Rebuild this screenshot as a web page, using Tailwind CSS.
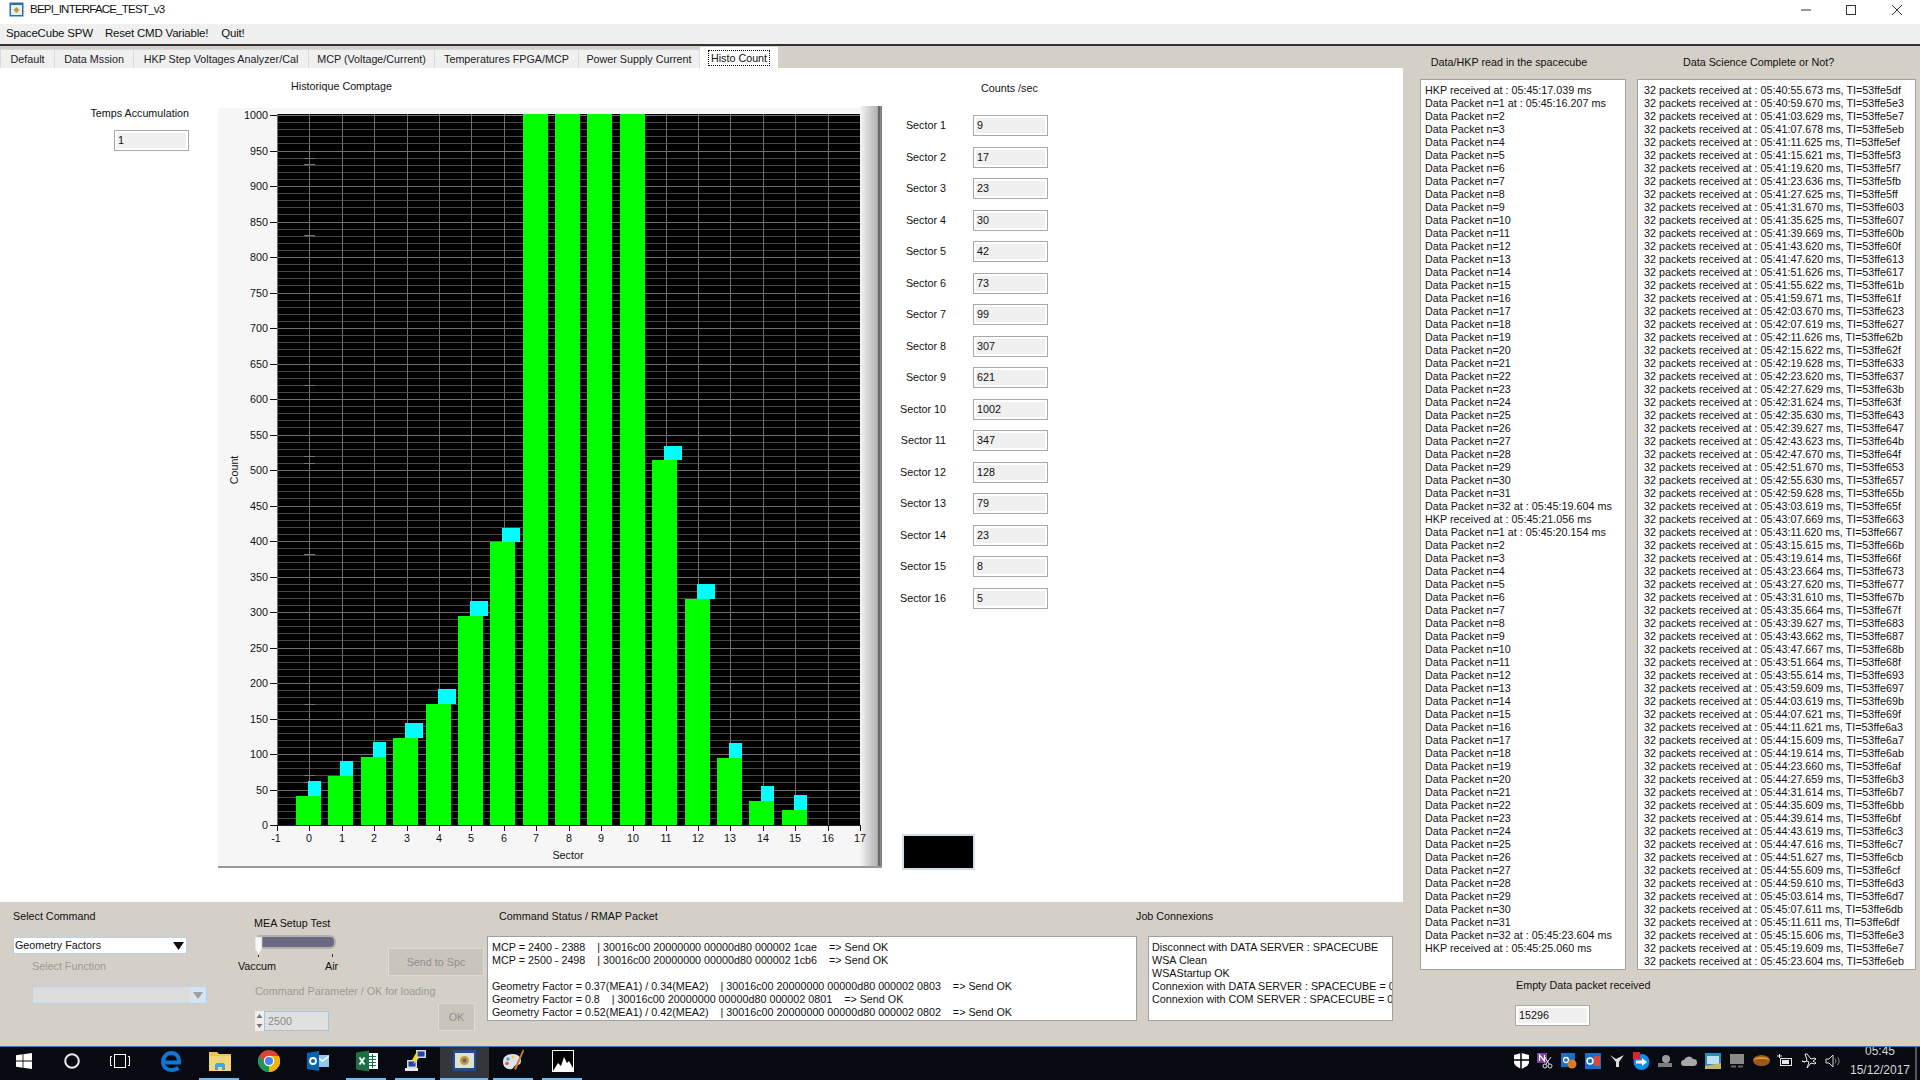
<!DOCTYPE html>
<html lang="en">
<head>
<meta charset="utf-8">
<title>BEPI_INTERFACE_TEST_v3</title>
<script src="https://cdn.jsdelivr.net/npm/@tailwindcss/browser@4"></script>
</head>
<body class="m-0">
<div class="w-[1920px] h-[1080px] overflow-hidden flex flex-col bg-[#d4d0c8] text-[#111] text-[10.75px] leading-[13px] font-['Liberation_Sans',sans-serif]">

  <!-- title bar -->
  <div class="h-[24px] pb-[5px] bg-white flex items-center shrink-0">
    <svg class="ml-[9px] w-[15px] h-[15px]" viewBox="0 0 15 15"><rect x="0.5" y="0.5" width="14" height="14" fill="#2f6fa8"/><rect x="2" y="3" width="11" height="10" fill="#e8eef5"/><path d="M7.5 5l3 3-3 3-3-3z" fill="#c79a2c"/></svg>
    <span class="ml-[6px] text-[11.5px] tracking-[-0.78px]">BEPI_INTERFACE_TEST_v3</span>
    <div class="ml-auto flex items-center">
      <svg class="w-[12px] h-[12px]" viewBox="0 0 12 12"><path d="M1 6h10" stroke="#333" stroke-width="1"/></svg>
      <svg class="ml-[33px] w-[12px] h-[12px]" viewBox="0 0 12 12"><rect x="1.5" y="1.5" width="9" height="9" fill="none" stroke="#333"/></svg>
      <svg class="ml-[34px] mr-[17px] w-[12px] h-[12px]" viewBox="0 0 12 12"><path d="M1 1l10 10M11 1L1 11" stroke="#333"/></svg>
    </div>
  </div>

  <!-- menu -->
  <div class="h-[22px] pb-[1px] bg-[#f0f0f0] border-b-2 border-[#333] flex items-center text-[11.5px] tracking-[-0.2px] shrink-0">
    <span class="ml-[6px]">SpaceCube SPW</span>
    <span class="ml-[12px]">Reset CMD Variable!</span>
    <span class="ml-[13px]">Quit!</span>
  </div>

  <div class="flex flex-1 min-h-0">
    <!-- left part -->
    <div class="w-[1403px] flex flex-col shrink-0">
      <!-- tabs -->
      <div class="h-[22px] flex items-end text-[#222]">
        <div class="w-[55px] h-[19px] bg-[#f0f0f0] border border-b-0 border-[#d9d9d9] flex items-center justify-center">Default</div>
        <div class="w-[79px] h-[19px] bg-[#f0f0f0] border border-b-0 border-l-0 border-[#d9d9d9] flex items-center justify-center">Data Mssion</div>
        <div class="w-[175px] h-[19px] bg-[#f0f0f0] border border-b-0 border-l-0 border-[#d9d9d9] flex items-center justify-center">HKP Step Voltages Analyzer/Cal</div>
        <div class="w-[126px] h-[19px] bg-[#f0f0f0] border border-b-0 border-l-0 border-[#d9d9d9] flex items-center justify-center">MCP (Voltage/Current)</div>
        <div class="w-[144px] h-[19px] bg-[#f0f0f0] border border-b-0 border-l-0 border-[#d9d9d9] flex items-center justify-center">Temperatures FPGA/MCP</div>
        <div class="w-[121px] h-[19px] bg-[#f0f0f0] border border-b-0 border-l-0 border-[#d9d9d9] flex items-center justify-center">Power Supply Current</div>
        <div class="w-[78px] h-[21px] bg-white flex items-start justify-center pt-[3px]"><span class="border border-dotted border-black px-[2px] h-[16px] leading-[14px] text-[#111]">Histo Count</span></div>
      </div>

      <!-- white page -->
      <div class="h-[834px] bg-white flex shrink-0">
        <div class="w-[218px] pr-[29px] pt-[39px] flex flex-col items-end shrink-0">
          <div class="whitespace-nowrap">Temps Accumulation</div>
          <div class="mt-[10px] w-[75px] h-[21px] border border-[#a8a8a8] bg-[#f0f0f0] shadow-[inset_0_0_0_2px_#fff] px-[3px] leading-[19px]">1</div>
        </div>

        <div class="w-[664px] shrink-0 pt-[12px]">
          <div class="pl-[73px] h-[13px] mb-[13px]">Historique Comptage</div>
          <svg class="block w-[664px] h-[762px] text-[10.75px]" viewBox="0 0 664 762" fill="#111">
            <defs><linearGradient id="edge" x1="0" x2="1" y1="0" y2="0"><stop offset="0" stop-color="#f5f5f5"/><stop offset="0.75" stop-color="#b5b5b5"/><stop offset="1" stop-color="#777"/></linearGradient></defs>
            <rect x="0" y="2" width="664" height="760" fill="#f6f6f6"/>
            <rect x="642" y="0" width="22" height="762" fill="url(#edge)"/>
            <rect x="660" y="0" width="2" height="762" fill="#666"/>
            <rect x="0" y="760" width="664" height="2" fill="#9a9a9a"/>
            <g transform="translate(59 8)">
              <rect x="0" y="0" width="583" height="711" fill="#000"/>
              <path shape-rendering="crispEdges" stroke="#484848" d="M0 8H583M0 15H583M0 22H583M0 29H583M0 44H583M0 51H583M0 58H583M0 65H583M0 79H583M0 86H583M0 93H583M0 100H583M0 115H583M0 122H583M0 129H583M0 136H583M0 150H583M0 157H583M0 164H583M0 171H583M0 186H583M0 193H583M0 200H583M0 207H583M0 221H583M0 228H583M0 235H583M0 242H583M0 257H583M0 264H583M0 271H583M0 278H583M0 292H583M0 299H583M0 306H583M0 313H583M0 328H583M0 335H583M0 342H583M0 349H583M0 363H583M0 370H583M0 377H583M0 384H583M0 399H583M0 406H583M0 413H583M0 420H583M0 434H583M0 441H583M0 448H583M0 455H583M0 470H583M0 477H583M0 484H583M0 491H583M0 505H583M0 512H583M0 519H583M0 526H583M0 541H583M0 548H583M0 555H583M0 562H583M0 576H583M0 583H583M0 590H583M0 597H583M0 612H583M0 619H583M0 626H583M0 633H583M0 647H583M0 654H583M0 661H583M0 668H583M0 683H583M0 690H583M0 697H583M0 704H583"/>
              <path shape-rendering="crispEdges" stroke="#6e6e6e" d="M0 1H583M0 37H583M0 72H583M0 108H583M0 143H583M0 179H583M0 214H583M0 250H583M0 285H583M0 321H583M0 356H583M0 392H583M0 427H583M0 463H583M0 498H583M0 534H583M0 569H583M0 605H583M0 640H583M0 676H583M32 0V711M65 0V711M97 0V711M130 0V711M162 0V711M194 0V711M227 0V711M259 0V711M292 0V711M324 0V711M356 0V711M389 0V711M421 0V711M453 0V711M486 0V711M518 0V711M551 0V711M0 0V711"/>
              <path shape-rendering="crispEdges" stroke="#777" d="M27 44H38M27 50H38M27 121H38M27 271H38M27 342H38M27 349H38M27 440H38M27 590H38M27 661H38M27 668H38"/>
              <g fill="#00ffff" shape-rendering="crispEdges">
                <rect x="31" y="667" width="13" height="15"/><rect x="63" y="647" width="13" height="15"/><rect x="96" y="628" width="13" height="15"/><rect x="128" y="609" width="18" height="15"/><rect x="161" y="575" width="18" height="15"/><rect x="193" y="487" width="18" height="15"/><rect x="225" y="414" width="18" height="14"/><rect x="387" y="332" width="18" height="14"/><rect x="420" y="470" width="18" height="15"/><rect x="452" y="629" width="13" height="15"/><rect x="484" y="672" width="13" height="15"/><rect x="517" y="681" width="13" height="15"/>
              </g>
              <g fill="#00ff00" shape-rendering="crispEdges">
                <rect x="19" y="682" width="25" height="29"/><rect x="51" y="662" width="25" height="49"/><rect x="84" y="643" width="25" height="68"/><rect x="116" y="624" width="25" height="87"/><rect x="149" y="590" width="25" height="121"/><rect x="181" y="502" width="25" height="209"/><rect x="213" y="428" width="25" height="283"/><rect x="246" y="0" width="25" height="711"/><rect x="278" y="0" width="25" height="711"/><rect x="310" y="0" width="25" height="711"/><rect x="343" y="0" width="25" height="711"/><rect x="375" y="346" width="25" height="365"/><rect x="408" y="485" width="25" height="226"/><rect x="440" y="644" width="25" height="67"/><rect x="472" y="687" width="25" height="24"/><rect x="505" y="696" width="25" height="15"/>
              </g>
              <rect x="0" y="711" width="584" height="1" fill="#222"/>
              <path shape-rendering="crispEdges" stroke="#111" d="M-7 1H0M-7 37H0M-7 72H0M-7 108H0M-7 143H0M-7 179H0M-7 214H0M-7 250H0M-7 285H0M-7 321H0M-7 356H0M-7 392H0M-7 427H0M-7 463H0M-7 498H0M-7 534H0M-7 569H0M-7 605H0M-7 640H0M-7 676H0M-7 711H0M0 711V717M32 711V717M65 711V717M97 711V717M130 711V717M162 711V717M194 711V717M227 711V717M259 711V717M292 711V717M324 711V717M356 711V717M389 711V717M421 711V717M453 711V717M486 711V717M518 711V717M551 711V717M583 711V717"/>
              <g text-anchor="end">
                <text x="-9" y="5">1000</text><text x="-9" y="41">950</text><text x="-9" y="76">900</text><text x="-9" y="112">850</text><text x="-9" y="147">800</text><text x="-9" y="183">750</text><text x="-9" y="218">700</text><text x="-9" y="254">650</text><text x="-9" y="289">600</text><text x="-9" y="325">550</text><text x="-9" y="360">500</text><text x="-9" y="396">450</text><text x="-9" y="431">400</text><text x="-9" y="467">350</text><text x="-9" y="502">300</text><text x="-9" y="538">250</text><text x="-9" y="573">200</text><text x="-9" y="609">150</text><text x="-9" y="644">100</text><text x="-9" y="680">50</text><text x="-9" y="715">0</text>
              </g>
              <g text-anchor="middle">
                <text x="-1" y="728">-1</text><text x="32" y="728">0</text><text x="65" y="728">1</text><text x="97" y="728">2</text><text x="130" y="728">3</text><text x="162" y="728">4</text><text x="194" y="728">5</text><text x="227" y="728">6</text><text x="259" y="728">7</text><text x="292" y="728">8</text><text x="324" y="728">9</text><text x="356" y="728">10</text><text x="389" y="728">11</text><text x="421" y="728">12</text><text x="453" y="728">13</text><text x="486" y="728">14</text><text x="518" y="728">15</text><text x="551" y="728">16</text><text x="583" y="728">17</text>
                <text x="291" y="745">Sector</text>
              </g>
              <text text-anchor="middle" transform="translate(-39 356) rotate(-90)">Count</text>
            </g>
          </svg>
        </div>

        <div class="flex-1 flex flex-col">
          <div class="mt-[14px] ml-[99px] h-[13px] whitespace-nowrap">Counts /sec</div>
          <div class="mt-[20px] grid grid-cols-[64px_75px] gap-x-[27px] auto-rows-[31.5px] items-start">
            <div class="text-right leading-[20px]">Sector 1</div><div class="h-[21px] border border-[#a8a8a8] bg-[#f0f0f0] shadow-[inset_0_0_0_2px_#fff] px-[3px] leading-[19px]">9</div>
            <div class="text-right leading-[20px]">Sector 2</div><div class="h-[21px] border border-[#a8a8a8] bg-[#f0f0f0] shadow-[inset_0_0_0_2px_#fff] px-[3px] leading-[19px]">17</div>
            <div class="text-right leading-[20px]">Sector 3</div><div class="h-[21px] border border-[#a8a8a8] bg-[#f0f0f0] shadow-[inset_0_0_0_2px_#fff] px-[3px] leading-[19px]">23</div>
            <div class="text-right leading-[20px]">Sector 4</div><div class="h-[21px] border border-[#a8a8a8] bg-[#f0f0f0] shadow-[inset_0_0_0_2px_#fff] px-[3px] leading-[19px]">30</div>
            <div class="text-right leading-[20px]">Sector 5</div><div class="h-[21px] border border-[#a8a8a8] bg-[#f0f0f0] shadow-[inset_0_0_0_2px_#fff] px-[3px] leading-[19px]">42</div>
            <div class="text-right leading-[20px]">Sector 6</div><div class="h-[21px] border border-[#a8a8a8] bg-[#f0f0f0] shadow-[inset_0_0_0_2px_#fff] px-[3px] leading-[19px]">73</div>
            <div class="text-right leading-[20px]">Sector 7</div><div class="h-[21px] border border-[#a8a8a8] bg-[#f0f0f0] shadow-[inset_0_0_0_2px_#fff] px-[3px] leading-[19px]">99</div>
            <div class="text-right leading-[20px]">Sector 8</div><div class="h-[21px] border border-[#a8a8a8] bg-[#f0f0f0] shadow-[inset_0_0_0_2px_#fff] px-[3px] leading-[19px]">307</div>
            <div class="text-right leading-[20px]">Sector 9</div><div class="h-[21px] border border-[#a8a8a8] bg-[#f0f0f0] shadow-[inset_0_0_0_2px_#fff] px-[3px] leading-[19px]">621</div>
            <div class="text-right leading-[20px]">Sector 10</div><div class="h-[21px] border border-[#a8a8a8] bg-[#f0f0f0] shadow-[inset_0_0_0_2px_#fff] px-[3px] leading-[19px]">1002</div>
            <div class="text-right leading-[20px]">Sector 11</div><div class="h-[21px] border border-[#a8a8a8] bg-[#f0f0f0] shadow-[inset_0_0_0_2px_#fff] px-[3px] leading-[19px]">347</div>
            <div class="text-right leading-[20px]">Sector 12</div><div class="h-[21px] border border-[#a8a8a8] bg-[#f0f0f0] shadow-[inset_0_0_0_2px_#fff] px-[3px] leading-[19px]">128</div>
            <div class="text-right leading-[20px]">Sector 13</div><div class="h-[21px] border border-[#a8a8a8] bg-[#f0f0f0] shadow-[inset_0_0_0_2px_#fff] px-[3px] leading-[19px]">79</div>
            <div class="text-right leading-[20px]">Sector 14</div><div class="h-[21px] border border-[#a8a8a8] bg-[#f0f0f0] shadow-[inset_0_0_0_2px_#fff] px-[3px] leading-[19px]">23</div>
            <div class="text-right leading-[20px]">Sector 15</div><div class="h-[21px] border border-[#a8a8a8] bg-[#f0f0f0] shadow-[inset_0_0_0_2px_#fff] px-[3px] leading-[19px]">8</div>
            <div class="text-right leading-[20px]">Sector 16</div><div class="h-[21px] border border-[#a8a8a8] bg-[#f0f0f0] shadow-[inset_0_0_0_2px_#fff] px-[3px] leading-[19px]">5</div>
          </div>
          <div class="mt-[215px] ml-[20px] w-[73px] h-[36px] bg-black border-2 border-[#d0dce8]"></div>
        </div>
      </div>

      <!-- bottom controls -->
      <div class="flex-1 flex">
        <div class="ml-[13px] w-[194px] pt-[8px] shrink-0">
          <div class="h-[13px]">Select Command</div>
          <div class="mt-[14px] w-[174px] h-[17px] bg-white border border-[#b5d3ee] flex items-center px-[1px]">
            <span class="flex-1">Geometry Factors</span>
            <svg class="w-[11px] h-[8px] mr-[1px]" viewBox="0 0 11 8"><path d="M0 0h11L5.500 8z" fill="#111"/></svg>
          </div>
          <div class="mt-[6px] ml-[19px] h-[13px] text-[#9a9a9a]">Select Function</div>
          <div class="mt-[13px] ml-[19px] w-[175px] h-[18px] bg-[#dcdcdc] border border-[#b5d3ee] flex items-center justify-end">
            <div class="w-[16px] h-full bg-[#d4e4f2] flex items-center justify-center"><svg class="w-[10px] h-[7px]" viewBox="0 0 10 7"><path d="M0 0h10L5 7z" fill="#a0a0a0"/></svg></div>
          </div>
        </div>

        <div class="ml-[31px] w-[246px] pt-[15px] shrink-0">
          <div class="flex">
            <div class="w-[150px] shrink-0">
              <div class="ml-[16px] h-[13px] whitespace-nowrap">MEA Setup Test</div>
              <div class="relative ml-[16px] mt-[4px] w-[84px] h-[27px]">
                <div class="ml-[3px] mt-[5px] w-[79px] h-[14px] rounded-r-[6px] rounded-l-[2px] bg-[#6b6a85] border-2 border-[#b4b0a8]"></div>
                <svg class="absolute left-0 top-[1px] w-[9px] h-[19px]" viewBox="0 0 9 19"><path d="M1 1h7v12l-3.500 6L1 13z" fill="#f7f7f7" stroke="#c9c9c9" stroke-width="0.6"/></svg>
                <div class="ml-[4px] mt-[5px] w-[75px] h-[3px] border-x border-[#333]"></div>
              </div>
              <div class="mt-[-2px] flex h-[13px]">
                <span>Vaccum</span><span class="ml-[49px]">Air</span>
              </div>
            </div>
            <div class="mt-[31px] w-[96px] h-[28px] border border-[#dedbd5] bg-[#c9c5bd] text-[#8f8f8f] flex items-center justify-center">Send to Spc</div>
          </div>
          <div class="mt-[9px] ml-[17px] h-[13px] text-[#9a9a9a] whitespace-nowrap">Command Parameter / OK for loading</div>
          <div class="mt-[5px] ml-[17px] flex items-end">
            <div class="w-[9px] h-[20px] flex flex-col bg-[#eee]">
              <svg class="w-[9px] h-[10px]" viewBox="0 0 9 10"><path d="M1.500 7L4.500 3l3 4z" fill="#777"/></svg>
              <svg class="w-[9px] h-[10px]" viewBox="0 0 9 10"><path d="M1.500 3L4.500 7l3-4z" fill="#777"/></svg>
            </div>
            <div class="w-[65px] h-[20px] border border-[#a9c3dc] bg-[#e0e0e0] text-[#8a8a8a] px-[3px] leading-[18px]">2500</div>
            <div class="ml-[109px] w-[37px] h-[28px] border border-[#dedbd5] bg-[#c9c5bd] text-[#8f8f8f] flex items-center justify-center">OK</div>
          </div>
        </div>

        <div class="ml-[3px] w-[650px] pt-[8px] shrink-0">
          <div class="ml-[12px] h-[13px]">Command Status / RMAP Packet</div>
          <div class="mt-[13px] h-[85px] bg-white border border-[#a0a0a0] pl-[4px] pt-[4px] overflow-hidden whitespace-pre">MCP = 2400 - 2388    | 30016c00 20000000 00000d80 000002 1cae    =&gt; Send OK
MCP = 2500 - 2498    | 30016c00 20000000 00000d80 000002 1cb6    =&gt; Send OK

Geometry Factor = 0.37(MEA1) / 0.34(MEA2)    | 30016c00 20000000 00000d80 000002 0803    =&gt; Send OK
Geometry Factor = 0.8    | 30016c00 20000000 00000d80 000002 0801    =&gt; Send OK
Geometry Factor = 0.52(MEA1) / 0.42(MEA2)    | 30016c00 20000000 00000d80 000002 0802    =&gt; Send OK</div>
        </div>

        <div class="ml-[11px] w-[245px] pt-[8px] shrink-0">
          <div class="ml-[-12px] h-[13px]">Job Connexions</div>
          <div class="mt-[13px] h-[85px] bg-white border border-[#a0a0a0] pl-[3px] pt-[4px] overflow-hidden whitespace-pre">Disconnect with DATA SERVER : SPACECUBE
WSA Clean
WSAStartup OK
Connexion with DATA SERVER : SPACECUBE = 0
Connexion with COM SERVER : SPACECUBE = 0</div>
        </div>
      </div>
    </div>

    <!-- right part -->
    <div class="flex-1 min-w-0">
      <div class="pt-[10px] flex h-[33px] whitespace-nowrap">
        <div class="ml-[27px] w-[158px] text-center">Data/HKP read in the spacecube</div>
        <div class="ml-[95px] w-[149px] text-center">Data Science Complete or Not?</div>
      </div>
      <div class="flex">
        <div class="ml-[17px] w-[206px] h-[891px] bg-white border border-[#a0a0a0] pl-[4px] pt-[4px] overflow-hidden whitespace-pre">HKP received at : 05:45:17.039 ms
Data Packet n=1 at : 05:45:16.207 ms
Data Packet n=2
Data Packet n=3
Data Packet n=4
Data Packet n=5
Data Packet n=6
Data Packet n=7
Data Packet n=8
Data Packet n=9
Data Packet n=10
Data Packet n=11
Data Packet n=12
Data Packet n=13
Data Packet n=14
Data Packet n=15
Data Packet n=16
Data Packet n=17
Data Packet n=18
Data Packet n=19
Data Packet n=20
Data Packet n=21
Data Packet n=22
Data Packet n=23
Data Packet n=24
Data Packet n=25
Data Packet n=26
Data Packet n=27
Data Packet n=28
Data Packet n=29
Data Packet n=30
Data Packet n=31
Data Packet n=32 at : 05:45:19.604 ms
HKP received at : 05:45:21.056 ms
Data Packet n=1 at : 05:45:20.154 ms
Data Packet n=2
Data Packet n=3
Data Packet n=4
Data Packet n=5
Data Packet n=6
Data Packet n=7
Data Packet n=8
Data Packet n=9
Data Packet n=10
Data Packet n=11
Data Packet n=12
Data Packet n=13
Data Packet n=14
Data Packet n=15
Data Packet n=16
Data Packet n=17
Data Packet n=18
Data Packet n=19
Data Packet n=20
Data Packet n=21
Data Packet n=22
Data Packet n=23
Data Packet n=24
Data Packet n=25
Data Packet n=26
Data Packet n=27
Data Packet n=28
Data Packet n=29
Data Packet n=30
Data Packet n=31
Data Packet n=32 at : 05:45:23.604 ms
HKP received at : 05:45:25.060 ms</div>
        <div class="ml-[11px] w-[279px] h-[891px] bg-white border border-[#a0a0a0] pl-[6px] pt-[4px] overflow-hidden whitespace-pre">32 packets received at : 05:40:55.673 ms, TI=53ffe5df
32 packets received at : 05:40:59.670 ms, TI=53ffe5e3
32 packets received at : 05:41:03.629 ms, TI=53ffe5e7
32 packets received at : 05:41:07.678 ms, TI=53ffe5eb
32 packets received at : 05:41:11.625 ms, TI=53ffe5ef
32 packets received at : 05:41:15.621 ms, TI=53ffe5f3
32 packets received at : 05:41:19.620 ms, TI=53ffe5f7
32 packets received at : 05:41:23.636 ms, TI=53ffe5fb
32 packets received at : 05:41:27.625 ms, TI=53ffe5ff
32 packets received at : 05:41:31.670 ms, TI=53ffe603
32 packets received at : 05:41:35.625 ms, TI=53ffe607
32 packets received at : 05:41:39.669 ms, TI=53ffe60b
32 packets received at : 05:41:43.620 ms, TI=53ffe60f
32 packets received at : 05:41:47.620 ms, TI=53ffe613
32 packets received at : 05:41:51.626 ms, TI=53ffe617
32 packets received at : 05:41:55.622 ms, TI=53ffe61b
32 packets received at : 05:41:59.671 ms, TI=53ffe61f
32 packets received at : 05:42:03.670 ms, TI=53ffe623
32 packets received at : 05:42:07.619 ms, TI=53ffe627
32 packets received at : 05:42:11.626 ms, TI=53ffe62b
32 packets received at : 05:42:15.622 ms, TI=53ffe62f
32 packets received at : 05:42:19.628 ms, TI=53ffe633
32 packets received at : 05:42:23.620 ms, TI=53ffe637
32 packets received at : 05:42:27.629 ms, TI=53ffe63b
32 packets received at : 05:42:31.624 ms, TI=53ffe63f
32 packets received at : 05:42:35.630 ms, TI=53ffe643
32 packets received at : 05:42:39.627 ms, TI=53ffe647
32 packets received at : 05:42:43.623 ms, TI=53ffe64b
32 packets received at : 05:42:47.670 ms, TI=53ffe64f
32 packets received at : 05:42:51.670 ms, TI=53ffe653
32 packets received at : 05:42:55.630 ms, TI=53ffe657
32 packets received at : 05:42:59.628 ms, TI=53ffe65b
32 packets received at : 05:43:03.619 ms, TI=53ffe65f
32 packets received at : 05:43:07.669 ms, TI=53ffe663
32 packets received at : 05:43:11.620 ms, TI=53ffe667
32 packets received at : 05:43:15.615 ms, TI=53ffe66b
32 packets received at : 05:43:19.614 ms, TI=53ffe66f
32 packets received at : 05:43:23.664 ms, TI=53ffe673
32 packets received at : 05:43:27.620 ms, TI=53ffe677
32 packets received at : 05:43:31.610 ms, TI=53ffe67b
32 packets received at : 05:43:35.664 ms, TI=53ffe67f
32 packets received at : 05:43:39.627 ms, TI=53ffe683
32 packets received at : 05:43:43.662 ms, TI=53ffe687
32 packets received at : 05:43:47.667 ms, TI=53ffe68b
32 packets received at : 05:43:51.664 ms, TI=53ffe68f
32 packets received at : 05:43:55.614 ms, TI=53ffe693
32 packets received at : 05:43:59.609 ms, TI=53ffe697
32 packets received at : 05:44:03.619 ms, TI=53ffe69b
32 packets received at : 05:44:07.621 ms, TI=53ffe69f
32 packets received at : 05:44:11.621 ms, TI=53ffe6a3
32 packets received at : 05:44:15.609 ms, TI=53ffe6a7
32 packets received at : 05:44:19.614 ms, TI=53ffe6ab
32 packets received at : 05:44:23.660 ms, TI=53ffe6af
32 packets received at : 05:44:27.659 ms, TI=53ffe6b3
32 packets received at : 05:44:31.614 ms, TI=53ffe6b7
32 packets received at : 05:44:35.609 ms, TI=53ffe6bb
32 packets received at : 05:44:39.614 ms, TI=53ffe6bf
32 packets received at : 05:44:43.619 ms, TI=53ffe6c3
32 packets received at : 05:44:47.616 ms, TI=53ffe6c7
32 packets received at : 05:44:51.627 ms, TI=53ffe6cb
32 packets received at : 05:44:55.609 ms, TI=53ffe6cf
32 packets received at : 05:44:59.610 ms, TI=53ffe6d3
32 packets received at : 05:45:03.614 ms, TI=53ffe6d7
32 packets received at : 05:45:07.611 ms, TI=53ffe6db
32 packets received at : 05:45:11.611 ms, TI=53ffe6df
32 packets received at : 05:45:15.606 ms, TI=53ffe6e3
32 packets received at : 05:45:19.609 ms, TI=53ffe6e7
32 packets received at : 05:45:23.604 ms, TI=53ffe6eb</div>
      </div>
      <div class="mt-[9px] ml-[113px] h-[13px] whitespace-nowrap">Empty Data packet received</div>
      <div class="mt-[13px] ml-[112px] w-[75px] h-[21px] border border-[#a8a8a8] bg-[#f0f0f0] shadow-[inset_0_0_0_2px_#fff] px-[3px] leading-[19px]">15296</div>
    </div>
  </div>

  <!-- taskbar -->
  <div class="h-[34px] shrink-0 bg-[#070a10] border-t border-[#3b78b0] flex items-stretch text-[#d8d8d8]">
    <div class="w-[48px] pb-[6px] flex items-center justify-center"><svg class="w-[16px] h-[16px]" viewBox="0 0 16 16"><path fill="#fff" d="M0 2.200 6.600 1.300v6.300H0zM7.400 1.200 16 0v7.600H7.400zM0 8.400h6.600v6.300L0 13.800zM7.400 8.400H16V16l-8.600-1.200z"/></svg></div>
    <div class="w-[48px] pb-[6px] flex items-center justify-center"><svg class="w-[16px] h-[16px]" viewBox="0 0 16 16"><circle cx="8" cy="8" r="6.800" fill="none" stroke="#e8e8e8" stroke-width="2"/></svg></div>
    <div class="w-[48px] pb-[6px] flex items-center justify-center"><svg class="w-[20px] h-[16px]" viewBox="0 0 20 16"><rect x="4.500" y="1.500" width="11" height="13" fill="none" stroke="#fff"/><path d="M2 3.500H.5v9H2M18 3.500h1.500v9H18" fill="none" stroke="#fff"/></svg></div>
    <div class="ml-[2px] w-[49px] pb-[6px] flex items-center justify-center"><svg class="w-[22px] h-[22px]" viewBox="0 0 22 22"><path d="M4 12.500H19C19.500 6.500 16 3 11.500 3 6.500 3 3 7 3 12s3.500 8 8.500 8c3 0 5-.8 7-2" fill="none" stroke="#0a78d4" stroke-width="4"/></svg></div>
    <div class="relative w-[49px] pb-[6px] flex items-center justify-center">
      <svg class="w-[22px] h-[22px]" viewBox="0 0 22 22"><path d="M0 2h8l2 2h12v16H0z" fill="#e9c35a"/><rect x="0" y="6" width="22" height="15" fill="#f2d577"/><path d="M6 20v-5c0-1 1-2 2-2h6c1 0 2 1 2 2v5h-3v-3H9v3z" fill="#3fa7e0"/></svg>
      <div class="absolute bottom-0 left-[4px] w-[40px] h-[2px] bg-[#76b9ed]"></div>
    </div>
    <div class="w-[49px] pb-[6px] flex items-center justify-center"><svg class="w-[22px] h-[22px]" viewBox="0 0 22 22"><circle cx="11" cy="11" r="11" fill="#db4437"/><path d="M11 11L1.500 16.500A11 11 0 0 0 11 22z" fill="#0f9d58"/><path d="M1.500 16.500A11 11 0 0 1 1.500 5.500L6 13z" fill="#0f9d58"/><path d="M11 22A11 11 0 0 0 21 6H11z" fill="#f4b400"/><circle cx="11" cy="11" r="5.200" fill="#fff"/><circle cx="11" cy="11" r="4" fill="#4285f4"/></svg></div>
    <div class="w-[49px] pb-[6px] flex items-center justify-center"><svg class="w-[22px] h-[22px]" viewBox="0 0 22 22"><rect x="9" y="5" width="13" height="12" fill="#8fc7f0"/><path d="M9 6l6.500 5L22 6" fill="none" stroke="#fff" stroke-width="1.500"/><path d="M0 3l12-2v20L0 19z" fill="#0a64ad"/><circle cx="6" cy="11" r="3" fill="none" stroke="#fff" stroke-width="1.800"/></svg></div>
    <div class="relative w-[49px] pb-[6px] flex items-center justify-center">
      <svg class="w-[22px] h-[22px]" viewBox="0 0 22 22"><rect x="11" y="3" width="11" height="16" fill="#fff"/><path d="M13 6.500h7M13 9.500h7M13 12.500h7M13 15.500h7M16.500 4v14" stroke="#1d7044"/><path d="M0 2.500l13-2v21l-13-2z" fill="#1d7044"/><path d="M3.500 7.500l5 7M8.500 7.500l-5 7" stroke="#fff" stroke-width="1.800"/></svg>
      <div class="absolute bottom-0 left-[4px] w-[40px] h-[2px] bg-[#76b9ed]"></div>
    </div>
    <div class="relative w-[49px] pb-[6px] flex items-center justify-center">
      <svg class="w-[22px] h-[22px]" viewBox="0 0 22 22"><rect x="11" y="0" width="10" height="8" fill="#d8d8d8"/><rect x="12.500" y="1.500" width="7" height="5" fill="#1c3fb0"/><rect x="2" y="10" width="10" height="8" fill="#d8d8d8"/><rect x="3.500" y="11.500" width="7" height="5" fill="#1c3fb0"/><rect x="0" y="18" width="13" height="3" fill="#e8e8e8"/><path d="M11 3L7 10h3l-2 5 6-7h-3l2-5z" fill="#f5d800"/></svg>
      <div class="absolute bottom-0 left-[4px] w-[40px] h-[2px] bg-[#76b9ed]"></div>
    </div>
    <div class="relative w-[49px] pb-[6px] flex items-center justify-center bg-[#33363b]">
      <svg class="w-[23px] h-[22px]" viewBox="0 0 23 22"><rect x="0" y="0" width="23" height="21" fill="#1f4d8f"/><rect x="2" y="3" width="19" height="15" fill="#dde1d0"/><circle cx="11.500" cy="10.500" r="4.500" fill="#c79a2c"/><circle cx="11.500" cy="10.500" r="2" fill="#3c6ca8"/></svg>
      <div class="absolute bottom-0 left-0 w-[48px] h-[2px] bg-[#76b9ed]"></div>
    </div>
    <div class="relative w-[49px] pb-[6px] flex items-center justify-center">
      <svg class="w-[23px] h-[23px]" viewBox="0 0 23 23"><path d="M1 13C1 7 6 5 11 5c5 0 8 3 8 7 0 3-2 4-4 4-3 0-3 3-5 4-5 1-9-2-9-7z" fill="#dfe3e8"/><circle cx="6" cy="10" r="1.800" fill="#4aa3df"/><circle cx="5" cy="14.500" r="1.800" fill="#e0524d"/><circle cx="11" cy="8" r="1.500" fill="#f2c14e"/><path d="M21 0L12 20l2 1L22 2z" fill="#d07a2d"/></svg>
      <div class="absolute bottom-0 left-[4px] w-[40px] h-[2px] bg-[#76b9ed]"></div>
    </div>
    <div class="relative w-[49px] pb-[6px] flex items-center justify-center">
      <svg class="w-[22px] h-[22px]" viewBox="0 0 22 22"><rect x="0.500" y="0.500" width="21" height="21" fill="#000" stroke="#fff"/><path d="M1 21l5-8 3 3 3-9 3 6 2-2 4 7v3H1z" fill="#fff"/></svg>
      <div class="absolute bottom-0 left-[4px] w-[40px] h-[2px] bg-[#76b9ed]"></div>
    </div>

    <div class="ml-auto flex pb-[6px]">
      <div class="w-[24px] flex items-center justify-center"><svg class="w-[15px] h-[16px]" viewBox="0 0 15 16"><path d="M0 2l7.500-2L15 2v7c0 3-3 5-7.500 7C3 14 0 12 0 9z" fill="#fff"/><path d="M7 0v16M0 7h15" stroke="#000" stroke-width="1.500"/></svg></div>
      <div class="w-[24px] flex items-center justify-center"><svg class="w-[16px] h-[16px]" viewBox="0 0 16 16"><rect x="0" y="0" width="10" height="10" fill="#7b3fa0"/><path d="M2.500 8V2l5 6V2" fill="none" stroke="#fff" stroke-width="1.200"/><circle cx="8" cy="13" r="2" fill="none" stroke="#ddd"/><circle cx="13" cy="13" r="2" fill="none" stroke="#ddd"/><path d="M9 11l5-7M12 11L8 4" stroke="#ddd"/></svg></div>
      <div class="w-[24px] flex items-center justify-center"><svg class="w-[16px] h-[16px]" viewBox="0 0 16 16"><rect x="0" y="0" width="14" height="14" fill="#1b6ec2"/><circle cx="5" cy="7" r="2.500" fill="none" stroke="#fff" stroke-width="1.300"/><circle cx="11" cy="11" r="4.500" fill="#d97a2b"/></svg></div>
      <div class="w-[24px] flex items-center justify-center"><svg class="w-[16px] h-[16px]" viewBox="0 0 16 16"><rect x="0" y="0" width="16" height="16" fill="#1b6ec2"/><circle cx="5" cy="8" r="3" fill="none" stroke="#fff" stroke-width="1.500"/><rect x="9" y="3" width="6" height="10" fill="#d9483b"/></svg></div>
      <div class="w-[24px] flex items-center justify-center"><svg class="w-[14px] h-[14px]" viewBox="0 0 14 14"><path d="M0 1l6 4 8-4-5 7v5H6V8z" fill="#dcdcdc"/></svg></div>
      <div class="w-[24px] flex items-center justify-center"><svg class="w-[17px] h-[18px]" viewBox="0 0 17 18"><circle cx="8.500" cy="10" r="8" fill="#0e8ee9"/><path d="M3 8.500h6V6l5 4-5 4v-2.500H3z" fill="#fff"/><rect x="0" y="0" width="7" height="7" fill="#d8262c"/></svg></div>
      <div class="w-[24px] flex items-center justify-center"><svg class="w-[16px] h-[14px]" viewBox="0 0 16 14"><circle cx="9" cy="5" r="4" fill="#9a9a9a"/><rect x="1" y="9" width="14" height="4" fill="#7d7d7d"/></svg></div>
      <div class="w-[24px] flex items-center justify-center"><svg class="w-[16px] h-[10px]" viewBox="0 0 16 10"><path d="M3 10a3 3 0 0 1 0-6 5 5 0 0 1 9-1 3.500 3.500 0 0 1 1 7z" fill="#a8a8a8"/></svg></div>
      <div class="w-[24px] flex items-center justify-center"><svg class="w-[16px] h-[16px]" viewBox="0 0 16 16"><rect width="16" height="16" fill="#2a8ac8"/><rect x="2" y="3" width="12" height="8" fill="#bfe0f2"/><path d="M0 13l16-3v6H0z" fill="#c6b46a"/></svg></div>
      <div class="w-[24px] flex items-center justify-center"><svg class="w-[14px] h-[14px]" viewBox="0 0 14 14"><rect width="14" height="10" fill="#8a8a8a"/><rect x="1" y="11.500" width="5" height="2" fill="#666"/><rect x="8" y="11.500" width="5" height="2" fill="#666"/></svg></div>
      <div class="w-[24px] flex items-center justify-center"><svg class="w-[17px] h-[11px]" viewBox="0 0 17 11"><ellipse cx="8.500" cy="5.500" rx="8.500" ry="5.500" fill="#9c5a1a"/><path d="M0 5.500C2 1 15 1 17 5.500 15 3 2 3 0 5.500z" fill="#d9b530"/></svg></div>
      <div class="w-[24px] flex items-center justify-center"><svg class="w-[16px] h-[14px]" viewBox="0 0 16 14"><rect x="3.500" y="4.500" width="11" height="7" fill="none" stroke="#e8e8e8"/><rect x="5" y="6" width="7" height="4" fill="#e8e8e8"/><path d="M0 2h5M2.500 0v4" stroke="#e8e8e8"/></svg></div>
      <div class="w-[24px] flex items-center justify-center"><svg class="w-[16px] h-[16px]" viewBox="0 0 16 16"><path d="M1 8l3 1 2-2-2-6h2l4 5 4-1 1 1-3 2 3 2-1 1-4-1-4 5H6l2-6-2-1-3 1z" fill="none" stroke="#e8e8e8"/></svg></div>
      <div class="w-[24px] flex items-center justify-center"><svg class="w-[16px] h-[14px]" viewBox="0 0 16 14"><path d="M1 5h3l4-4v12L4 9H1z" fill="none" stroke="#d8d8d8"/><path d="M10 4.500c1.200 1.500 1.200 3.500 0 5M12.500 3c2 2.500 2 5.500 0 8" fill="none" stroke="#888"/></svg></div>
    </div>
    <div class="w-[72px] overflow-hidden flex flex-col items-center text-[12px] leading-[14px] border-r-2 border-[#555] mr-[3px]">
      <div class="mt-[-3px]">05:45</div>
      <div class="mt-[5px] whitespace-nowrap">15/12/2017</div>
    </div>
  </div>
</div>
</body>
</html>
